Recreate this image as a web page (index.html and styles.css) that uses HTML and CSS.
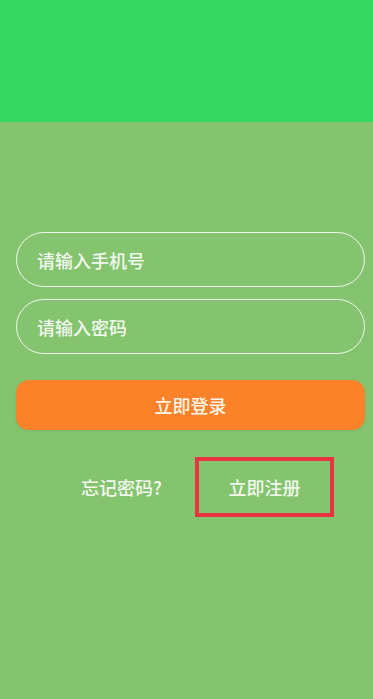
FILE: index.html
```html
<!DOCTYPE html>
<html>
<head>
<meta charset="utf-8">
<link rel="stylesheet" href="styles.css">
</head>
<body>
<div class="page">
  <div class="header"></div>
  <div class="main">
    <div class="field">请输入手机号</div>
    <div class="field second">请输入密码</div>
    <div class="login">立即登录</div>
    <div class="links">
      <div class="forgot">忘记密码?</div>
      <div class="register">立即注册</div>
    </div>
  </div>
</div>
</body>
</html>
```

FILE: styles.css
```css
html, body {
  margin: 0;
  padding: 0;
}
body {
  width: 373px;
  height: 699px;
  overflow: hidden;
  font-family: "Noto Sans CJK SC", "Noto Sans", sans-serif;
  background: #85c46f;
}
.page {
  display: flex;
  flex-direction: column;
  height: 699px;
}
.header {
  height: 122px;
  background: #36d862;
}
.main {
  flex: 1;
  background: #85c46f;
  padding: 110px 8px 0 16px;
  display: flex;
  flex-direction: column;
}
.field {
  height: 53px;
  border: 1.5px solid rgba(255,255,255,0.85);
  border-radius: 28px;
  display: flex;
  align-items: center;
  padding-left: 20px;
  color: rgba(255,255,255,0.92);
  font-size: 18px;
  font-weight: 500;
}
.second {
  margin-top: 12px;
}
.login {
  margin-top: 26px;
  height: 50px;
  border-radius: 13px;
  background: #fb8228;
  color: #fff6ea;
  font-size: 18px;
  font-weight: 500;
  display: flex;
  align-items: center;
  justify-content: center;
  box-shadow: 0 1px 3px rgba(0,0,0,0.08);
}
.links {
  margin-top: 27px;
  display: flex;
  align-items: center;
  padding-left: 65px;
}
.forgot {
  color: #f4f8ee;
  font-size: 18px;
  font-weight: 500;
  width: 114px;
}
.register {
  width: 131px;
  height: 52px;
  border: 4px solid #e8343f;
  display: flex;
  align-items: center;
  justify-content: center;
  color: #f4f8ee;
  font-size: 18px;
  font-weight: 500;
}
```
